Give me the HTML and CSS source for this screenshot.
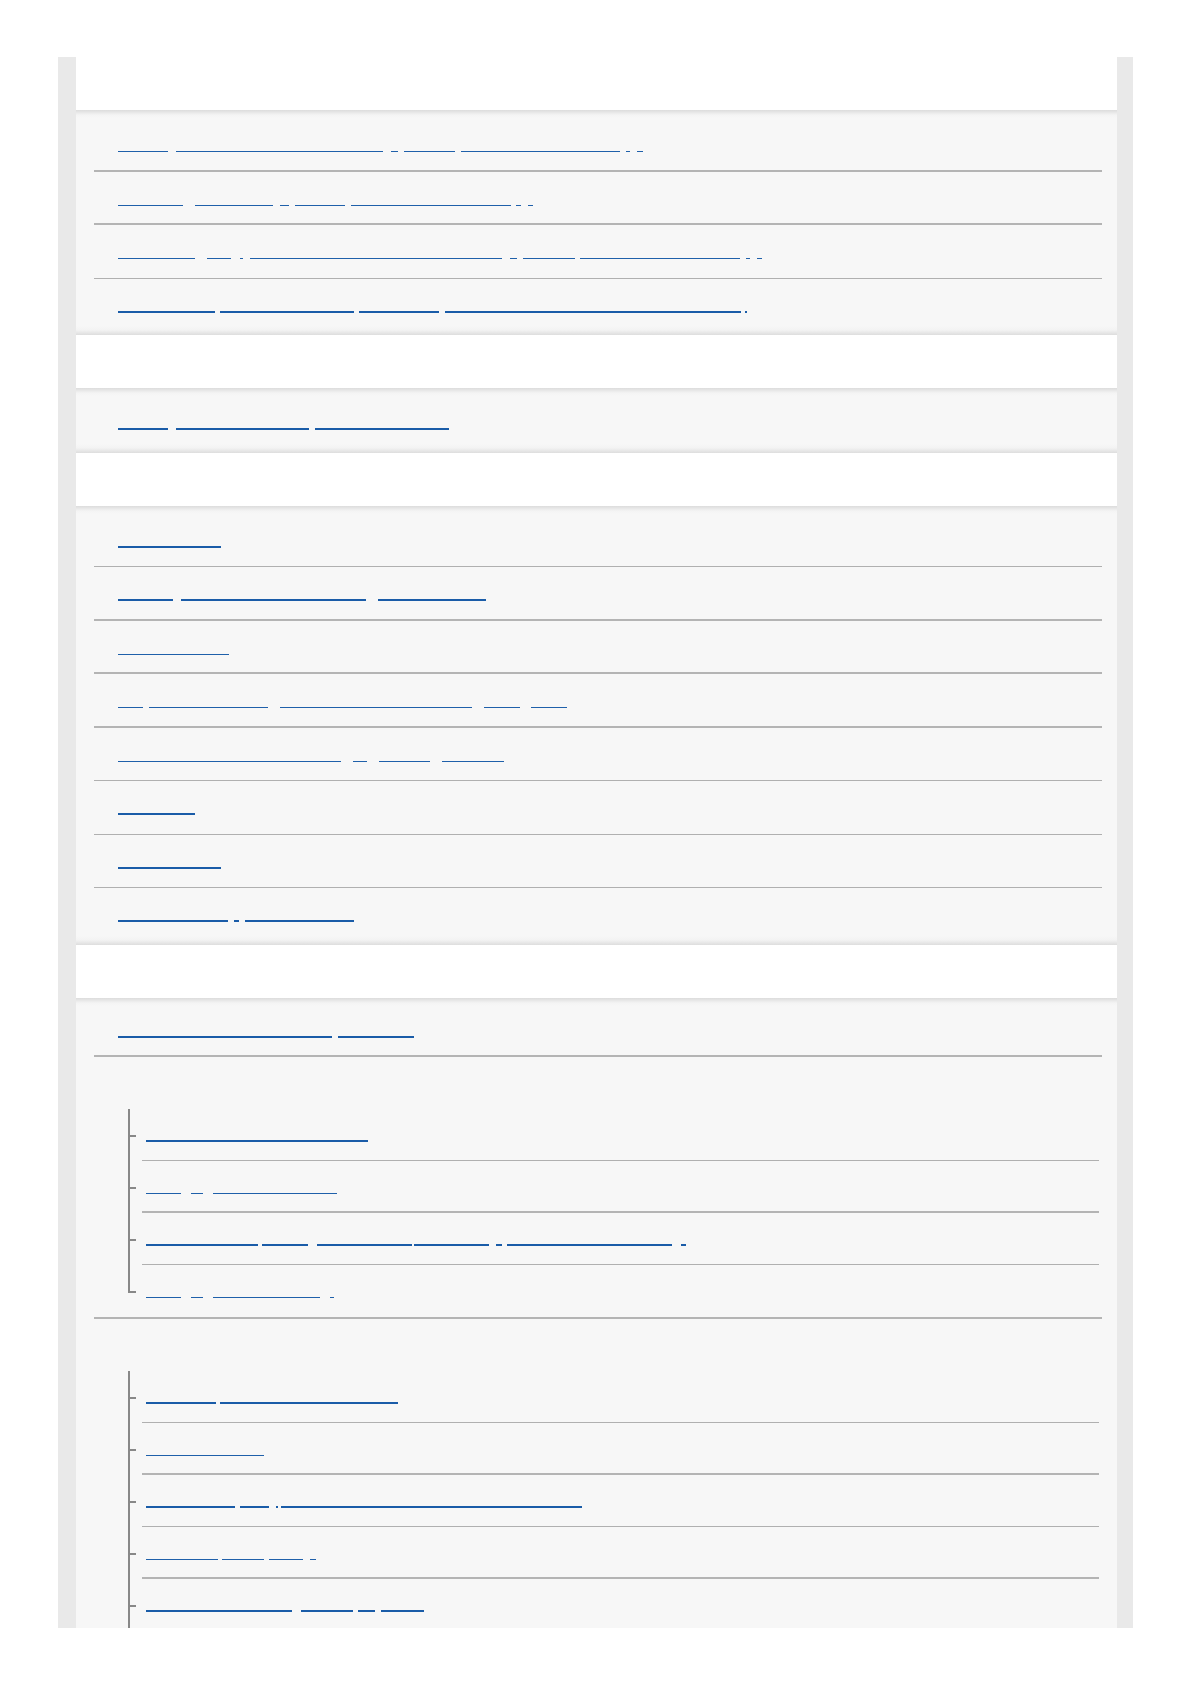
FILE: index.html
```html
<!DOCTYPE html>
<html lang="en">
<head>
<meta charset="utf-8">
<title>Help Guide</title>
<link rel="stylesheet" href="styles.css">
</head>
<body>
<div class="frame">
  <div class="page">
    <div class="head"></div>
    <div class="panel">
      <a class="row thin bb2" href="#"><span class="u" style="width:50px"></span><span class="u" style="margin-left:8px;width:207px"></span><span class="u" style="margin-left:8px;width:7px"></span><span class="u" style="margin-left:6px;width:51px"></span><span class="u" style="margin-left:6px;width:159px"></span><span class="u" style="margin-left:6px;width:4px"></span><span class="u" style="margin-left:7px;width:6px"></span></a>
      <a class="row thin bb2" href="#"><span class="u" style="width:65px"></span><span class="u" style="margin-left:12px;width:78px"></span><span class="u" style="margin-left:7px;width:9px"></span><span class="u" style="margin-left:6px;width:50px"></span><span class="u" style="margin-left:6px;width:160px"></span><span class="u" style="margin-left:5px;width:5px"></span><span class="u" style="margin-left:7px;width:5px"></span></a>
      <a class="row thin" href="#"><span class="u" style="width:77px"></span><span class="u" style="margin-left:12px;width:24px"></span><span class="u" style="margin-left:9px;width:3px"></span><span class="u" style="margin-left:7px;width:252px"></span><span class="u" style="margin-left:8px;width:7px"></span><span class="u" style="margin-left:6px;width:52px"></span><span class="u" style="margin-left:5px;width:160px"></span><span class="u" style="margin-left:6px;width:4px"></span><span class="u" style="margin-left:7px;width:5px"></span></a>
      <a class="row" href="#"><span class="u" style="width:97px"></span><span class="u" style="margin-left:5px;width:134px"></span><span class="u" style="margin-left:5px;width:80px"></span><span class="u" style="margin-left:6px;width:296px"></span><span class="u" style="margin-left:4px;width:2px"></span></a>
    </div>
    <div class="head"></div>
    <div class="panel">
      <a class="row" href="#"><span class="u" style="width:50px"></span><span class="u" style="margin-left:8px;width:133px"></span><span class="u" style="margin-left:6px;width:134px"></span></a>
    </div>
    <div class="head"></div>
    <div class="panel">
      <a class="row" href="#"><span class="u" style="width:103px"></span></a>
      <a class="row bb2" href="#"><span class="u" style="width:55px"></span><span class="u" style="margin-left:8px;width:185px"></span><span class="u" style="margin-left:12px;width:108px"></span></a>
      <a class="row thin bb2" href="#"><span class="u" style="width:111px"></span></a>
      <a class="row thin bb2" href="#"><span class="u" style="width:25px"></span><span class="u" style="margin-left:6px;width:119px"></span><span class="u" style="margin-left:12px;width:192px"></span><span class="u" style="margin-left:12px;width:36px"></span><span class="u" style="margin-left:11px;width:36px"></span></a>
      <a class="row thin" href="#"><span class="u" style="width:223px"></span><span class="u" style="margin-left:12px;width:14px"></span><span class="u" style="margin-left:12px;width:51px"></span><span class="u" style="margin-left:12px;width:62px"></span></a>
      <a class="row" href="#"><span class="u" style="width:77px"></span></a>
      <a class="row" href="#"><span class="u" style="width:103px"></span></a>
      <a class="row" href="#"><span class="u" style="width:110px"></span><span class="u" style="margin-left:6px;width:5px"></span><span class="u" style="margin-left:6px;width:109px"></span></a>
    </div>
    <div class="head"></div>
    <div class="panel tight">
      <a class="row bb2" href="#"><span class="u" style="width:214px"></span><span class="u" style="margin-left:6px;width:76px"></span></a>
      <div class="group bb2">
        <div class="subhead"></div>
        <ul class="tree">
          <li><div class="conn"><div class="conn-top"></div><div class="conn-tick"></div><div class="conn-bot"></div></div><a class="leaf" href="#"><span class="u" style="width:222px"></span></a></li>
          <li class="thin"><div class="conn"><div class="conn-top"></div><div class="conn-tick"></div><div class="conn-bot"></div></div><a class="leaf bb2" href="#"><span class="u" style="width:35px"></span><span class="u" style="margin-left:10px;width:12px"></span><span class="u" style="margin-left:10px;width:124px"></span></a></li>
          <li><div class="conn"><div class="conn-top"></div><div class="conn-tick"></div><div class="conn-bot"></div></div><a class="leaf" href="#"><span class="u" style="width:112px"></span><span class="u" style="margin-left:4px;width:46px"></span><span class="u" style="margin-left:9px;width:95px"></span><span class="u" style="margin-left:2px;width:75px"></span><span class="u" style="margin-left:7px;width:6px"></span><span class="u" style="margin-left:5px;width:165px"></span><span class="u" style="margin-left:9px;width:5px"></span></a></li>
          <li class="thin"><div class="conn"><div class="conn-top"></div><div class="conn-tick"></div><div class="conn-bot"></div></div><a class="leaf" href="#"><span class="u" style="width:35px"></span><span class="u" style="margin-left:10px;width:12px"></span><span class="u" style="margin-left:10px;width:107px"></span><span class="u" style="margin-left:10px;width:4px"></span></a></li>
        </ul>
      </div>
      <div class="group">
        <div class="subhead"></div>
        <ul class="tree">
          <li><div class="conn"><div class="conn-top"></div><div class="conn-tick"></div><div class="conn-bot"></div></div><a class="leaf" href="#"><span class="u" style="width:70px"></span><span class="u" style="margin-left:4px;width:178px"></span></a></li>
          <li class="thin"><div class="conn"><div class="conn-top"></div><div class="conn-tick"></div><div class="conn-bot"></div></div><a class="leaf bb2" href="#"><span class="u" style="width:118px"></span></a></li>
          <li><div class="conn"><div class="conn-top"></div><div class="conn-tick"></div><div class="conn-bot"></div></div><a class="leaf" href="#"><span class="u" style="width:89px"></span><span class="u" style="margin-left:5px;width:29px"></span><span class="u" style="margin-left:7px;width:2px"></span><span class="u" style="margin-left:3px;width:301px"></span></a></li>
          <li class="thin"><div class="conn"><div class="conn-top"></div><div class="conn-tick"></div><div class="conn-bot"></div></div><a class="leaf bb2" href="#"><span class="u" style="width:72px"></span><span class="u" style="margin-left:4px;width:42px"></span><span class="u" style="margin-left:5px;width:34px"></span><span class="u" style="margin-left:7px;width:6px"></span></a></li>
          <li><div class="conn"><div class="conn-top"></div><div class="conn-tick"></div><div class="conn-bot"></div></div><a class="leaf" href="#"><span class="u" style="width:146px"></span><span class="u" style="margin-left:9px;width:52px"></span><span class="u" style="margin-left:5px;width:17px"></span><span class="u" style="margin-left:6px;width:43px"></span></a></li>
          <li><div class="conn"><div class="conn-top"></div><div class="conn-tick"></div><div class="conn-bot"></div></div><a class="leaf" href="#"><span class="u" style="width:120px"></span></a></li>
          <li><div class="conn"><div class="conn-top"></div><div class="conn-tick"></div><div class="conn-bot"></div></div><a class="leaf" href="#"><span class="u" style="width:90px"></span></a></li>
        </ul>
      </div>
    </div>
  </div>
</div>
</body>
</html>
```

FILE: styles.css
```css
html, body {
  margin: 0;
  padding: 0;
  background: #ffffff;
  font-family: "Liberation Sans", Arial, sans-serif;
}

.frame {
  margin: 57px 0 0 58px;
  width: 1075px;
  height: 1571px;
  box-sizing: border-box;
  padding: 0 16px 0 18px;
  background: #e9e9e9;
}

.page {
  height: 100%;
  overflow: hidden;
  background: #ffffff;
}

.head {
  height: 53px;
  background: #ffffff;
}

.panel {
  padding: 8px 15px 3px 18px;
  background: linear-gradient(#dcdcdc 0, #f4f4f4 5px, #f7f7f7 8px, #f7f7f7 calc(100% - 9px), #f3f3f3 calc(100% - 5px), #dddddd 100%);
}

.panel.tight {
  padding-top: 6px;
}

.row {
  display: flex;
  align-items: flex-start;
  box-sizing: border-box;
  height: 53.5px;
  padding: 32px 0 0 24px;
  border-bottom: 1px solid #b0b0b0;
  text-decoration: none;
}

.panel > .row:last-child {
  border-bottom: none;
}

.bb2 {
  border-bottom-width: 2px !important;
  border-bottom-color: #b4b4b4 !important;
}

.u {
  display: block;
  flex: none;
  height: 2px;
  background: #1a5ca8;
}

.thin .u {
  height: 1px;
  margin-top: 1px;
  background: #1f60aa;
}

.group {
  border-bottom: 1px solid #b0b0b0;
}

.panel > .group:last-child {
  border-bottom: none;
}

.subhead {
  height: 52px;
}

.tree {
  list-style: none;
  margin: 0 3px 0 34px;
  padding: 0;
}

.tree li {
  display: flex;
  height: 52px;
}

.conn {
  flex: none;
  width: 14px;
  display: flex;
  flex-direction: column;
}

.conn-top {
  height: 26px;
  border-left: 2px solid #888888;
}

.conn-tick {
  width: 8px;
  height: 2px;
  background: #888888;
}

.conn-bot {
  flex: 1;
  border-left: 2px solid #888888;
}

.tree li:last-child .conn-bot {
  border-left: none;
}

.leaf {
  flex: 1;
  display: flex;
  align-items: flex-start;
  box-sizing: border-box;
  padding: 31px 0 0 4px;
  border-bottom: 1px solid #b0b0b0;
  text-decoration: none;
}

.tree li:last-child .leaf {
  border-bottom: none;
}
```
